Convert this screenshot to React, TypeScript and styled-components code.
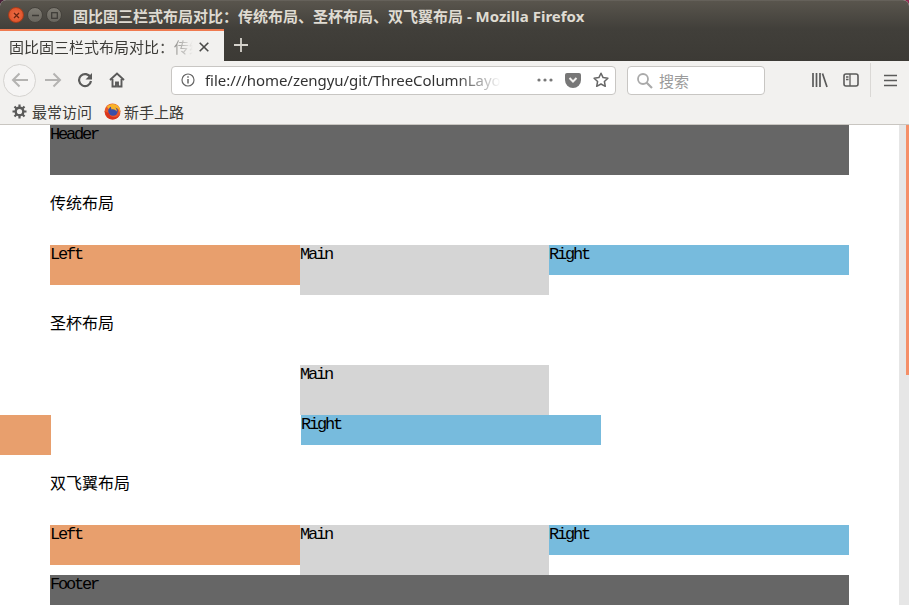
import React from 'react';
import styled, { createGlobalStyle } from 'styled-components';

const CHROME_FONT = '"Noto Sans", "Noto Sans CJK SC", sans-serif';

// Global
const GlobalStyle = createGlobalStyle`
  html, body {
    margin: 0;
    padding: 0;
    overflow: hidden;
  }

  body {
    background: #fff;
  }
`;

// Window
const Desktop = styled.div`
  width: 909px;
  height: 605px;
  background: linear-gradient(90deg, #4a2038, #8f2c50);
  overflow: hidden;
`;

const Window = styled.div`
  height: 100%;
  display: flex;
  flex-direction: column;
  border-radius: 6px 6px 0 0;
  overflow: hidden;
  background: #f2f1ef;
`;

const TitleBar = styled.div`
  height: 29px;
  flex: none;
  display: flex;
  align-items: center;
  padding-left: 8px;
  box-sizing: border-box;
  background: linear-gradient(#59554d, #413f3a);
  border-top: 1px solid #65615a;
`;

const WindowButton = styled.span<{ $close?: boolean; $gap?: number }>`
  width: 16px;
  height: 16px;
  border-radius: 50%;
  margin-right: ${(p) => p.$gap ?? 3}px;
  flex: none;
  display: flex;
  align-items: center;
  justify-content: center;
  background: ${(p) => (p.$close ? 'radial-gradient(circle, #f0704a, #d8491f)' : 'linear-gradient(#7d7a72, #68655e)')};
  border: 1px solid ${(p) => (p.$close ? '#a83c1a' : '#45423c')};
  box-sizing: border-box;

  svg {
    display: block;
  }
`;

const Title = styled.div`
  margin-left: 8px;
  font: 700 15px ${CHROME_FONT};
  color: #dfdbd2;
  white-space: nowrap;
`;

const TabStrip = styled.div`
  height: 32px;
  flex: none;
  display: flex;
  align-items: stretch;
  background: linear-gradient(#413f3a, #3c3a35);
  border-bottom: 1px solid #2c2b28;
  box-sizing: content-box;
  margin-bottom: -1px;
`;

const Tab = styled.div`
  width: 224px;
  height: 33px;
  box-sizing: border-box;
  display: flex;
  align-items: center;
  padding: 0 10px 0 9px;
  background: #f2f1ef;
  border-top: 2px solid #ef7a50;
  color: #3c3b37;
`;

const TabLabel = styled.span`
  width: 187px;
  overflow: hidden;
  white-space: nowrap;
  font: 400 15px ${CHROME_FONT};
  -webkit-mask-image: linear-gradient(90deg, #000 150px, transparent 184px);
  mask-image: linear-gradient(90deg, #000 150px, transparent 184px);
`;

const TabAction = styled.span<{ $left: number }>`
  display: flex;
  margin-left: ${(p) => p.$left}px;
  align-items: center;
`;

const Toolbar = styled.div`
  height: 36px;
  flex: none;
  box-sizing: border-box;
  padding-top: 2px;
  display: flex;
  align-items: center;
  background: #f2f1ef;
`;

const BackButton = styled.span`
  width: 33px;
  height: 33px;
  margin-left: 3px;
  flex: none;
  box-sizing: border-box;
  border: 1px solid #d5d3d0;
  border-radius: 50%;
  background: #f6f5f4;
  display: flex;
  align-items: center;
  justify-content: center;
`;

const IconSlot = styled.span<{ $left: number }>`
  display: flex;
  flex: none;
  margin-left: ${(p) => p.$left}px;
`;

const Field = styled.div<{ $width: number; $left: number }>`
  width: ${(p) => p.$width}px;
  height: 29px;
  margin-left: ${(p) => p.$left}px;
  flex: none;
  box-sizing: border-box;
  display: flex;
  align-items: center;
  background: #fff;
  border: 1px solid #c8c6c3;
  border-radius: 4px;
  font: 400 15px ${CHROME_FONT};
`;

const UrlText = styled.span`
  width: 296px;
  margin-left: 10px;
  overflow: hidden;
  white-space: nowrap;
  color: #333;
  letter-spacing: -0.05px;
  -webkit-mask-image: linear-gradient(90deg, #000 250px, transparent 296px);
  mask-image: linear-gradient(90deg, #000 250px, transparent 296px);
`;

const SearchHint = styled.span`
  margin-left: 6px;
  color: #9b9b9b;
`;

const Separator = styled.span`
  width: 1px;
  height: 34px;
  margin-left: 11px;
  background: #dad8d5;
`;

const Bookmarks = styled.div`
  height: 28px;
  flex: none;
  box-sizing: border-box;
  display: flex;
  align-items: center;
  padding: 1px 0 0 12px;
  background: #f2f1ef;
  border-bottom: 1px solid #c9c6c1;
`;

const Bookmark = styled.span<{ $left?: number; $gap?: number }>`
  display: flex;
  align-items: center;
  gap: ${(p) => p.$gap ?? 5}px;
  margin-left: ${(p) => p.$left ?? 0}px;
  font: 400 15px ${CHROME_FONT};
  color: #3c3b37;
`;

// Page
const Viewport = styled.div`
  flex: 1;
  min-height: 0;
  display: flex;
  background: #fff;
`;

const Page = styled.main`
  flex: 1;
  min-width: 0;
  padding-left: 50px;
  overflow: hidden;
`;

const Column = styled.div`
  width: 799px;
  font: 16px/18px "Liberation Mono", "Noto Sans CJK SC", monospace;
  color: #000;
`;

const Band = styled.div<{ $height: number }>`
  height: ${(p) => p.$height}px;
  background: #666;
`;

const Cell = styled.span`
  display: block;
  padding-top: 1px;
  font-size: 17px;
  letter-spacing: -2.2px;
`;

const Heading = styled.p`
  height: 70px;
  margin: 0;
  padding-top: 18px;
  box-sizing: border-box;
  font-family: "Noto Sans CJK SC", sans-serif;
`;

const Row = styled.div`
  display: flex;
  align-items: flex-start;
`;

const GrailRow = styled(Row)`
  height: 40px;
`;

const Left = styled.div<{ $pull?: number }>`
  width: 250px;
  height: 40px;
  flex: none;
  margin-left: ${(p) => p.$pull ?? 0}px;
  background: #e89f6d;
`;

const Center = styled.div<{ $inset?: number }>`
  width: 249px;
  height: 50px;
  flex: none;
  margin-left: ${(p) => p.$inset ?? 0}px;
  background: #d5d5d5;
`;

const Right = styled.div<{ $inset?: number }>`
  width: 300px;
  height: 30px;
  flex: none;
  margin-left: ${(p) => p.$inset ?? 0}px;
  background: #77bbdd;
`;

const Scrollbar = styled.div`
  width: 10px;
  flex: none;
  background: #e6e6e6;
`;

const ScrollThumb = styled.div`
  width: 3px;
  height: 250px;
  margin-left: 7px;
  background: #f58f68;
`;

// Icons
const ICON = '#5b5b5a';

const FirefoxIcon = () => (
  <svg width="17" height="17" viewBox="0 0 17 17">
    <circle cx="8.5" cy="8.5" r="8" fill="#e8572a" />
    <circle cx="9" cy="8" r="4.8" fill="#3a4fa8" />
    <path d="M3 3.5C6 0 12 0 15 4c1.5 2.500 1.500 4.500 1 6-.5-3-2-5-5-5.500 1.500 1 2 2.500 1.500 4-1-2-3-2.500-5-2-.5-1.500-.5-2-.5-3-1 .5-2 1.500-2 2.500C4.500 6 3.500 4.800 3 3.500z" fill="#f8b32a" />
    <path d="M.7 8c.5 5 4 8.500 8 8.500 4 0 7-3 7.800-6.500-1 2.500-3.500 4.500-6.500 4.300-3-.2-5-2-5-4.300C3 9.500 1.700 9 .7 8z" fill="#d9341e" />
  </svg>
);

const Gear = () => (
  <svg width="15" height="15" viewBox="0 0 15 15">
    <circle cx="7.5" cy="7.5" r="3.800" fill="none" stroke={ICON} strokeWidth="2.400" />
    <path d="M7.500 .5v3M7.500 11.500v3M.5 7.500h3M11.500 7.500h3M2.500 2.500l2.200 2.200M10.300 10.300l2.200 2.200M12.500 2.500l-2.200 2.200M4.700 10.300l-2.200 2.200" stroke={ICON} strokeWidth="2.200" />
  </svg>
);

function App() {
  return (
    <>
      <GlobalStyle />
      <Desktop>
        <Window>
          <TitleBar>
            <WindowButton $close>
              <svg width="7" height="7" viewBox="0 0 7 7">
                <path d="M1 1l5 5M6 1L1 6" stroke="#6a2410" strokeWidth="1.300" />
              </svg>
            </WindowButton>
            <WindowButton>
              <svg width="7" height="7" viewBox="0 0 7 7">
                <path d="M0 3.500h7" stroke="#3c3a36" strokeWidth="1.500" />
              </svg>
            </WindowButton>
            <WindowButton>
              <svg width="7" height="7" viewBox="0 0 7 7">
                <rect x=".7" y=".7" width="5.600" height="5.600" fill="none" stroke="#3c3a36" strokeWidth="1.200" />
              </svg>
            </WindowButton>
            <Title>固比固三栏式布局对比：传统布局、圣杯布局、双飞翼布局 - Mozilla Firefox</Title>
          </TitleBar>

          <TabStrip>
            <Tab>
              <TabLabel>固比固三栏式布局对比：传统布局</TabLabel>
              <TabAction $left={3}>
                <svg width="10" height="10" viewBox="0 0 10 10">
                  <path d="M.7.7l8.600 8.600M9.300.7L.7 9.300" stroke="#4a4a48" strokeWidth="1.600" />
                </svg>
              </TabAction>
            </Tab>
            <TabAction $left={10}>
              <svg width="14" height="14" viewBox="0 0 14 14">
                <path d="M7 0v14M0 7h14" stroke="#d6d3cc" strokeWidth="1.800" />
              </svg>
            </TabAction>
          </TabStrip>

          <Toolbar>
            <BackButton>
              <svg width="18" height="16" viewBox="0 0 18 16">
                <path d="M17 8H2M8.500 1.500L2 8l6.500 6.500" fill="none" stroke="#b4b3b1" strokeWidth="2" />
              </svg>
            </BackButton>
            <IconSlot $left={8}>
              <svg width="18" height="16" viewBox="0 0 18 16">
                <path d="M1 8h15M9.500 1.500L16 8l-6.500 6.500" fill="none" stroke="#b4b3b1" strokeWidth="2" />
              </svg>
            </IconSlot>
            <IconSlot $left={15}>
              <svg width="16" height="16" viewBox="0 0 16 16">
                <path d="M13.500 5.500A6 6 0 1 0 14 9" fill="none" stroke={ICON} strokeWidth="2.200" />
                <path d="M15 1v6.500H8.500z" fill={ICON} />
              </svg>
            </IconSlot>
            <IconSlot $left={16}>
              <svg width="16" height="16" viewBox="0 0 16 16">
                <path d="M1 8l7-6.500L15 8M3.500 7v7.500h3.500v-4h2v4h3.500V7" fill="none" stroke={ICON} strokeWidth="1.900" />
              </svg>
            </IconSlot>
            <Field $left={46} $width={445}>
              <IconSlot $left={9}>
                <svg width="14" height="14" viewBox="0 0 14 14">
                  <circle cx="7" cy="7" r="6" fill="none" stroke="#666" strokeWidth="1.200" />
                  <path d="M7 6v4.500M7 3.200v1.500" stroke="#666" strokeWidth="1.500" />
                </svg>
              </IconSlot>
              <UrlText>file:///home/zengyu/git/ThreeColumnLayout</UrlText>
              <IconSlot $left={36}>
                <svg width="16" height="4" viewBox="0 0 16 4">
                  <circle cx="2" cy="2" r="1.600" fill="#777" />
                  <circle cx="8" cy="2" r="1.600" fill="#777" />
                  <circle cx="14" cy="2" r="1.600" fill="#777" />
                </svg>
              </IconSlot>
              <IconSlot $left={12}>
                <svg width="16" height="15" viewBox="0 0 16 15">
                  <path d="M2 0h12a2 2 0 0 1 2 2v5a8 8 0 0 1-16 0V2a2 2 0 0 1 2-2z" fill="#777" />
                  <path d="M4.500 5L8 8.500 11.500 5" fill="none" stroke="#f2f1ef" strokeWidth="2" />
                </svg>
              </IconSlot>
              <IconSlot $left={12}>
                <svg width="16" height="16" viewBox="0 0 16 16">
                  <path d="M8 1.200l2.100 4.400 4.800.6-3.500 3.300.9 4.800L8 12l-4.300 2.300.9-4.800L1.100 6.200l4.800-.6z" fill="none" stroke="#666" strokeWidth="1.500" strokeLinejoin="round" />
                </svg>
              </IconSlot>
            </Field>
            <Field $left={11} $width={138}>
              <IconSlot $left={8}>
                <svg width="17" height="17" viewBox="0 0 17 17">
                  <circle cx="7" cy="7" r="5" fill="none" stroke="#aaa" strokeWidth="1.800" />
                  <path d="M10.500 10.500l5.500 5.500" stroke="#aaa" strokeWidth="2.200" />
                </svg>
              </IconSlot>
              <SearchHint>搜索</SearchHint>
            </Field>
            <IconSlot $left={47}>
              <svg width="16" height="15" viewBox="0 0 16 15">
                <path d="M1 0v14M4.500 0v14M8 0v14M10.500 .5l4.500 13.500" stroke={ICON} strokeWidth="1.700" fill="none" />
              </svg>
            </IconSlot>
            <IconSlot $left={15}>
              <svg width="16" height="14" viewBox="0 0 16 14">
                <rect x="1" y="1" width="14" height="12" rx="2" fill="none" stroke={ICON} strokeWidth="1.600" />
                <path d="M7 1v12M3 4h2.500M3 6.500h2.500" stroke={ICON} strokeWidth="1.300" />
              </svg>
            </IconSlot>
            <Separator />
            <IconSlot $left={13}>
              <svg width="13" height="13" viewBox="0 0 13 13">
                <path d="M0 1.500h13M0 6.500h13M0 11.500h13" stroke={ICON} strokeWidth="1.700" />
              </svg>
            </IconSlot>
          </Toolbar>

          <Bookmarks>
            <Bookmark>
              <Gear />
              最常访问
            </Bookmark>
            <Bookmark $left={12} $gap={3}>
              <FirefoxIcon />
              新手上路
            </Bookmark>
          </Bookmarks>

          <Viewport>
            <Page>
              <Column>
                <Band $height={50}>
                  <Cell>Header</Cell>
                </Band>

                <Heading>传统布局</Heading>
                <Row>
                  <Left>
                    <Cell>Left</Cell>
                  </Left>
                  <Center>
                    <Cell>Main</Cell>
                  </Center>
                  <Right>
                    <Cell>Right</Cell>
                  </Right>
                </Row>

                <Heading>圣杯布局</Heading>
                <Center $inset={250}>
                  <Cell>Main</Cell>
                </Center>
                <GrailRow>
                  <Left $pull={-249}>
                    <Cell>Left</Cell>
                  </Left>
                  <Right $inset={250}>
                    <Cell>Right</Cell>
                  </Right>
                </GrailRow>

                <Heading>双飞翼布局</Heading>
                <Row>
                  <Left>
                    <Cell>Left</Cell>
                  </Left>
                  <Center>
                    <Cell>Main</Cell>
                  </Center>
                  <Right>
                    <Cell>Right</Cell>
                  </Right>
                </Row>
                <Band $height={50}>
                  <Cell>Footer</Cell>
                </Band>
              </Column>
            </Page>
            <Scrollbar>
              <ScrollThumb />
            </Scrollbar>
          </Viewport>
        </Window>
      </Desktop>
    </>
  );
}

export default App;
